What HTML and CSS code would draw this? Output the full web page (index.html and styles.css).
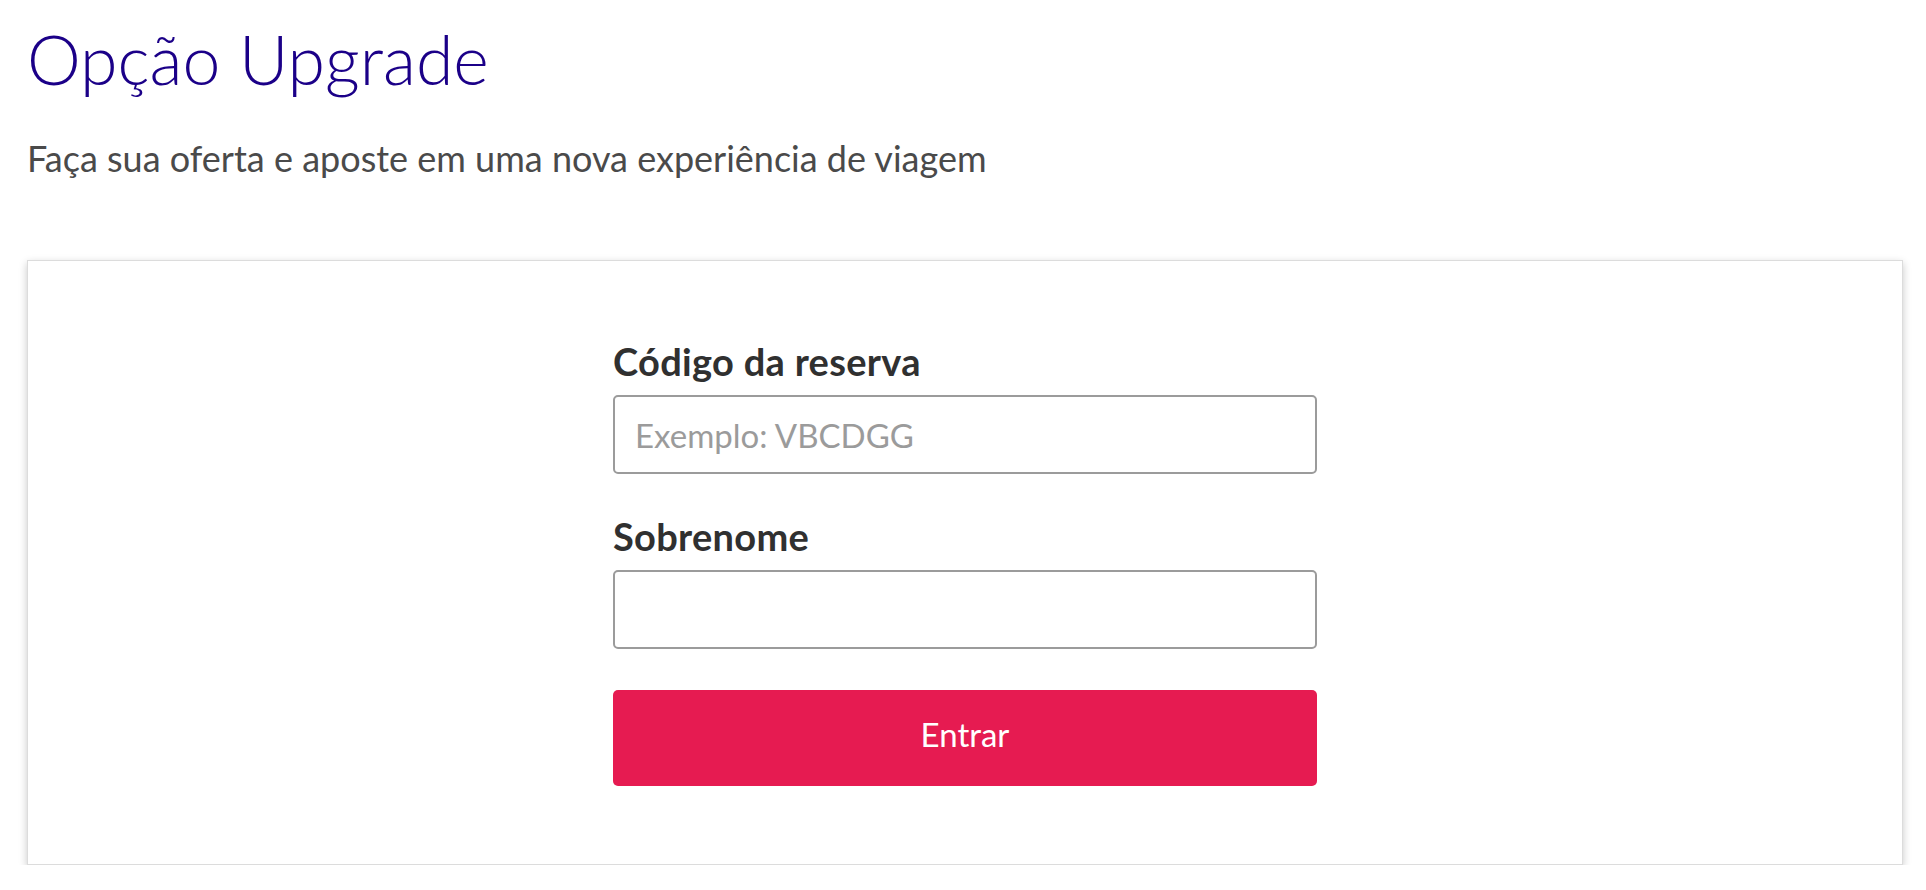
FILE: index.html
```html
<!DOCTYPE html>
<html lang="pt-BR">
<head>
<meta charset="utf-8">
<title>Opção Upgrade</title>
<link rel="stylesheet" href="styles.css">
</head>
<body>
<main class="page">
  <h1 class="title">Opção Upgrade</h1>
  <p class="subtitle">Faça sua oferta e aposte em uma nova experiência de viagem</p>
  <section class="card">
    <form class="form">
      <label class="label" for="codigo">Código da reserva</label>
      <input class="field" id="codigo" type="text" placeholder="Exemplo: VBCDGG">
      <label class="label label-second" for="sobrenome">Sobrenome</label>
      <input class="field" id="sobrenome" type="text">
      <button class="button" type="button">Entrar</button>
    </form>
  </section>
</main>
</body>
</html>
```
FILE: styles.css
```css
* { box-sizing: border-box; }
html, body { margin: 0; padding: 0; background: #ffffff; }
body { font-family: Lato, "Open Sans", sans-serif; }
.page { padding: 0 23px 0 27px; }
.title {
  margin: 0;
  padding-top: 19px;
  font-size: 68px;
  line-height: 80px;
  font-weight: 300;
  color: #1b0088;
}
.subtitle {
  margin: 37px 0 0;
  font-size: 36px;
  line-height: 44px;
  font-weight: 400;
  color: #4a4a4a;
}
.card {
  margin-top: 80px;
  height: 605px;
  background: #fff;
  border: 1px solid #dcdcdc;
  box-shadow: 0 3px 8px rgba(0,0,0,0.22);
  display: flex;
  justify-content: center;
}
.form {
  width: 704px;
  padding-top: 78px;
  display: flex;
  flex-direction: column;
}
.label {
  font-size: 38px;
  line-height: 44px;
  font-weight: 700;
  color: #303030;
  letter-spacing: 0.3px;
}
.label-second { margin-top: 40px; }
.field {
  margin-top: 12px;
  height: 79px;
  border: 2px solid #9b9b9b;
  border-radius: 5px;
  padding: 0 20px;
  font-family: inherit;
  font-size: 33px;
  color: #303030;
  background: #fff;
}
.field::placeholder { color: #9b9b9b; }
.button {
  margin-top: 41px;
  height: 96px;
  padding: 0 0 8px;
  border: none;
  border-radius: 5px;
  background: #e61b51;
  color: #fff;
  font-family: inherit;
  font-size: 33px;
}
```
